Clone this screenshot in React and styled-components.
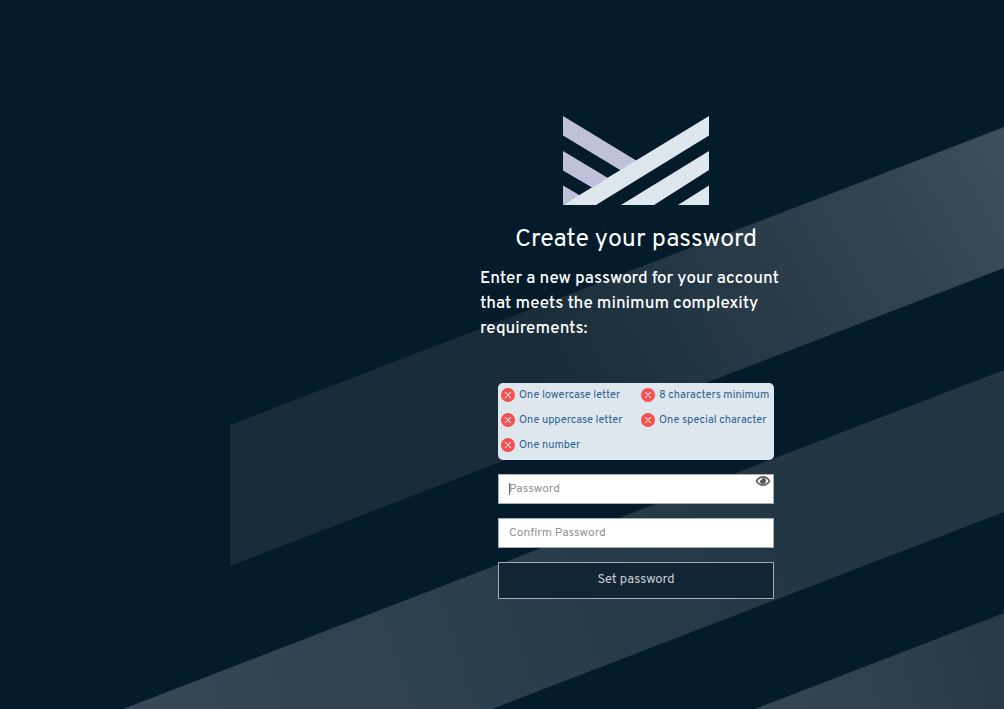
import { useState } from 'react'
import styled, { createGlobalStyle } from 'styled-components'
import { FaRegEye } from 'react-icons/fa'

const GlobalStyle = createGlobalStyle`
  * {
    box-sizing: border-box;
  }
  body {
    margin: 0;
    background: #031b2a;
    color: #fff;
    font-family: Overpass, Roboto, 'Liberation Sans', sans-serif;
  }
`;

let Page = styled.div`
  position: relative;
  min-height: 100vh;
  overflow: hidden;
`;

let Backdrop = styled.svg`
  position: absolute;
  inset: 0;
  width: 100%;
  height: 100%;
`;

let Main = styled.main`
  position: relative;
  display: flex;
  flex-direction: column;
  align-items: center;
  padding: 116px 0 40px 268px;
`;

let LogoSvg = styled.svg`
  display: block;
  width: 146px;
  height: 89px;
`;

let Title = styled.h1`
  margin: 18px 0 10px;
  font-size: 25px;
  line-height: 34px;
  font-weight: 400;
`;

let Intro = styled.p`
  width: 100%;
  max-width: 312px;
  margin: 0 0 41px;
  font-size: 17px;
  line-height: 25px;
  font-weight: 500;
`;

let Form = styled.form`
  display: flex;
  flex-direction: column;
  gap: 14px;
  width: 100%;
  max-width: 276px;
`;

let Rules = styled.ul`
  display: grid;
  grid-template-columns: 140px 1fr;
  grid-auto-rows: 25px;
  margin: 0;
  padding: 0 0 2px 3px;
  list-style: none;
  border-radius: 5px;
  background: #dee6ee;
`;

let Rule = styled.li`
  display: flex;
  align-items: center;
  gap: 4px;
  padding-bottom: 2px;
  color: ${props => props.$met ? '#2e7d4f' : '#2c6496'};
  font-size: 11px;
  line-height: 14px;
  white-space: nowrap;
`;

let RuleMark = styled.svg`
  flex: none;
  width: 14px;
  height: 14px;
`;

let Field = styled.div`
  position: relative;
  display: flex;
`;

let TextInput = styled.input`
  width: 100%;
  height: 30px;
  padding: 0 28px 1px 10px;
  border: 1px solid #a9adb3;
  border-radius: 0;
  outline: none;
  background: #fff;
  color: #333;
  caret-color: ${props => props.$ownCaret ? 'transparent' : 'auto'};
  font-family: inherit;
  font-size: 12px;
  &::placeholder {
    color: #949494;
    opacity: 1;
  }
`;

let Caret = styled.span`
  position: absolute;
  top: 9px;
  left: 11px;
  width: 1px;
  height: 12px;
  background: #666;
  pointer-events: none;
`;

let EyeButton = styled.button`
  position: absolute;
  top: 0;
  right: 4px;
  display: flex;
  padding: 0;
  border: 0;
  background: none;
  color: #555;
  font-size: 14px;
  cursor: pointer;
  svg {
    overflow: visible;
    stroke: currentColor;
    stroke-width: 24px;
  }
`;

let SubmitButton = styled.button`
  height: 37px;
  padding: 0 12px 2px;
  border: 1px solid #a3abb3;
  background: #122534;
  color: #c9cdd2;
  font-family: inherit;
  font-size: 13px;
  font-weight: 400;
  cursor: pointer;
`;

let rules = [
  { text: 'One lowercase letter', test: v => /[a-z]/.test(v) },
  { text: '8 characters minimum', test: v => v.length >= 8 },
  { text: 'One uppercase letter', test: v => /[A-Z]/.test(v) },
  { text: 'One special character', test: v => /[^A-Za-z0-9]/.test(v) },
  { text: 'One number', test: v => /[0-9]/.test(v) },
]

function Background(){
  return (
    <Backdrop viewBox="0 0 1004 709" preserveAspectRatio="xMidYMid slice" aria-hidden="true">
      <defs>
        <linearGradient id="top" gradientUnits="userSpaceOnUse" x1="560" y1="400" x2="1004" y2="150">
          <stop offset="0" stopColor="#182c39" />
          <stop offset="1" stopColor="#3d4d5a" />
        </linearGradient>
        <linearGradient id="middle" gradientUnits="userSpaceOnUse" x1="160" y1="709" x2="820" y2="500">
          <stop offset="0" stopColor="#364855" />
          <stop offset="0.5" stopColor="#2b3e4b" />
          <stop offset="1" stopColor="#213542" />
        </linearGradient>
        <linearGradient id="bottom" gradientUnits="userSpaceOnUse" x1="780" y1="709" x2="1004" y2="640">
          <stop offset="0" stopColor="#354652" />
          <stop offset="1" stopColor="#273a46" />
        </linearGradient>
      </defs>
      <polygon points="230,425 1004,127 1004,268 230,566" fill="url(#top)" />
      <polygon points="123,709 1004,370 1004,512 492,709" fill="url(#middle)" />
      <polygon points="755,709 1004,613 1004,709" fill="url(#bottom)" />
    </Backdrop>
  )
}

function Logo(){
  return (
    <LogoSvg viewBox="0 0 146 89" role="img" aria-label="Logo">
      <g fill="#bfc0d9">
        <polygon points="0,0 74,45 58,54.5 0,19.5" />
        <polygon points="0,35 45,62 29,71.5 0,54.5" />
        <polygon points="0,69.5 17,79.5 0,89" />
      </g>
      <g fill="#dee6ee">
        <polygon points="146,0 146,19.5 33,89 0,89" />
        <polygon points="146,35 146,54 91,89 58,89" />
        <polygon points="146,69.5 146,89 115,89" />
      </g>
    </LogoSvg>
  )
}

function Mark(props){
  return (
    <RuleMark viewBox="0 0 14 14" aria-hidden="true">
      <circle cx="7" cy="7" r="7" fill={props.met ? '#3fae6a' : '#f4504f'} />
      <path
        d={props.met ? 'M4 7.2l2.2 2.3L10 5' : 'M4.4 4.4l5.2 5.2M9.6 4.4l-5.2 5.2'}
        fill="none" stroke="#fbd9dc" strokeWidth="1.2" strokeLinecap="round"
      />
    </RuleMark>
  )
}

function App(){
  let [password, setPassword] = useState('');
  let [confirm, setConfirm] = useState('');
  let [show, setShow] = useState(false);
  let [focused, setFocused] = useState(true);
  // thin caret drawn over the placeholder while the box is still empty
  let ownCaret = focused && password === '';

  return (
    <Page>
      <GlobalStyle />
      <Background />
      <Main>
        <Logo />
        <Title>Create your password</Title>
        <Intro>
          Enter a new password for your account that meets the minimum complexity requirements:
        </Intro>
        <Form onSubmit={(e)=>{ e.preventDefault() }}>
          <Rules>
            {
              rules.map((rule)=>{
                let met = rule.test(password);
                return (
                  <Rule key={rule.text} $met={met}>
                    <Mark met={met} />
                    {rule.text}
                  </Rule>
                )
              })
            }
          </Rules>
          <Field>
            <TextInput
              type={show ? 'text' : 'password'} aria-label="Password" placeholder="Password" autoFocus
              value={password} onChange={(e)=>{ setPassword(e.target.value) }}
              onFocus={()=>{ setFocused(true) }} onBlur={()=>{ setFocused(false) }}
              $ownCaret={ownCaret}
            />
            { ownCaret ? <Caret /> : null }
            <EyeButton type="button" aria-label="Show password" onClick={()=>{ setShow(!show) }}>
              <FaRegEye />
            </EyeButton>
          </Field>
          <Field>
            <TextInput
              type="password" aria-label="Confirm Password" placeholder="Confirm Password"
              value={confirm} onChange={(e)=>{ setConfirm(e.target.value) }}
            />
          </Field>
          <SubmitButton type="submit">Set password</SubmitButton>
        </Form>
      </Main>
    </Page>
  )
}
export default App
